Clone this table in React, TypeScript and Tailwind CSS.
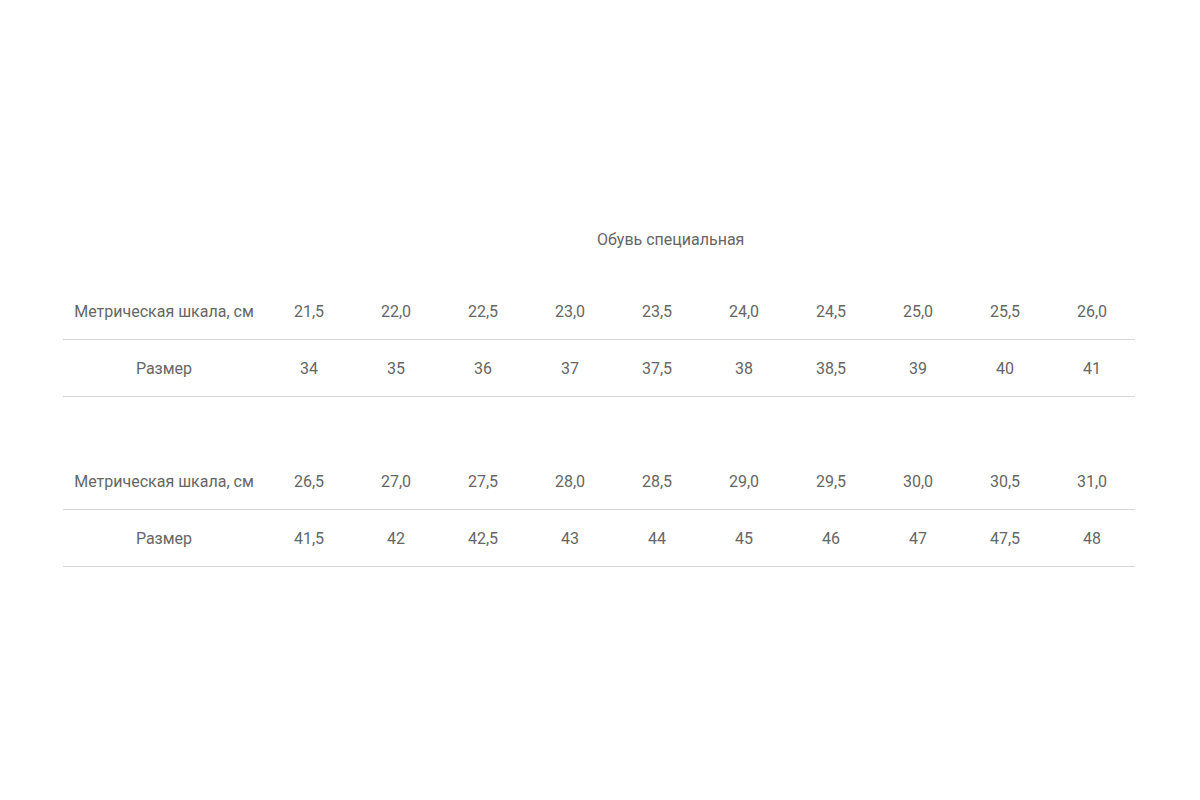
const tables = [
  {
    metric: ['21,5', '22,0', '22,5', '23,0', '23,5', '24,0', '24,5', '25,0', '25,5', '26,0'],
    sizes: ['34', '35', '36', '37', '37,5', '38', '38,5', '39', '40', '41'],
  },
  {
    metric: ['26,5', '27,0', '27,5', '28,0', '28,5', '29,0', '29,5', '30,0', '30,5', '31,0'],
    sizes: ['41,5', '42', '42,5', '43', '44', '45', '46', '47', '47,5', '48'],
  },
]

function Row({ label, values }: { label: string; values: string[] }) {
  return (
    <div className="flex h-[57px] items-center pt-[2px] border-b border-[#d4d4d4]">
      <div className="w-[202px] text-center">{label}</div>
      {values.map((v, i) => (
        <div key={i} className="w-[87px] text-center pl-[1px]">
          {v}
        </div>
      ))}
    </div>
  )
}

export default function App() {
  return (
    <div
      className="w-[1200px] h-[800px] bg-white text-[16px] leading-5 text-[#666]"
      style={{ fontFamily: 'Roboto, "Noto Sans", sans-serif' }}
    >
      <div className="ml-[63px] w-[1072px] pt-[230px]">
        <div className="pl-[534px]">Обувь специальная</div>
        <div className="mt-[33px]">
          <Row label="Метрическая шкала, см" values={tables[0].metric} />
          <Row label="Размер" values={tables[0].sizes} />
        </div>
        <div className="mt-[56px]">
          <Row label="Метрическая шкала, см" values={tables[1].metric} />
          <Row label="Размер" values={tables[1].sizes} />
        </div>
      </div>
    </div>
  )
}
